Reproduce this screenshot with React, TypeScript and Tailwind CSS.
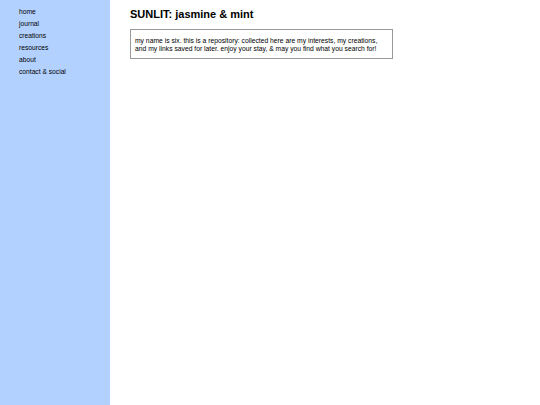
export default function App() {
  const links = ["home", "journal", "creations", "resources", "about", "contact & social"];
  return (
    <div className="flex min-h-[405px] w-[540px] bg-white text-black" style={{ fontFamily: '"Liberation Sans", Arial, sans-serif' }}>
      <nav className="w-[110px] shrink-0 bg-[#b3d1ff] pl-[19px] pt-[7px]">
        <ul className="flex flex-col">
          {links.map((l) => (
            <li key={l} className="h-[12px] text-[6.7px] leading-[10px] text-black">{l}</li>
          ))}
        </ul>
      </nav>
      <main className="flex-1 pl-[20px] pt-[8px]">
        <h1 className="text-[11px] font-bold leading-[13px]">SUNLIT: jasmine &amp; mint</h1>
        <div className="mt-[8px] w-[263px] border border-[#999999] pl-[4px] pr-[6px] pt-[7px] pb-[6px] text-[6.75px] leading-[7.5px]">
          my name is six. this is a repository: collected here are my interests, my creations, and my links saved for later. enjoy your stay, &amp; may you find what you search for!
        </div>
      </main>
    </div>
  );
}
